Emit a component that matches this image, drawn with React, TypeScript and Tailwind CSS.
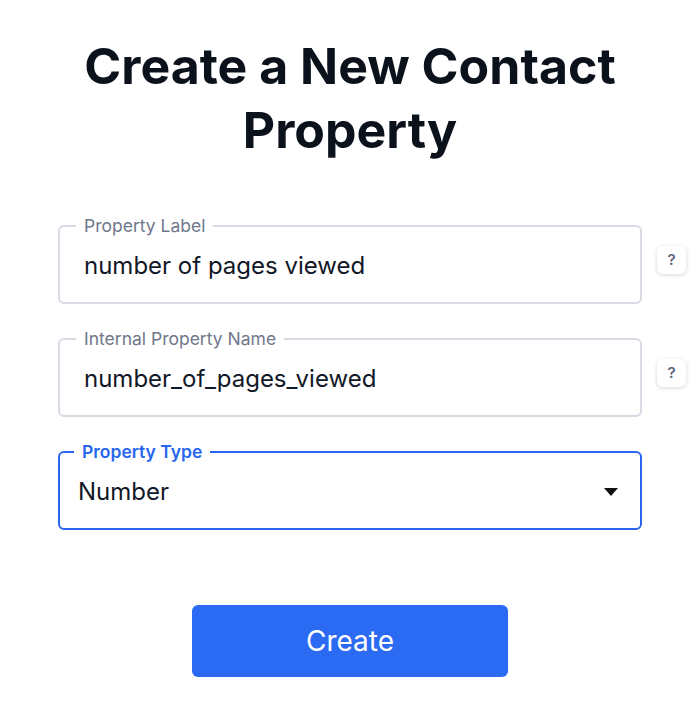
import { useState } from "react";

const font = { fontFamily: '"Inter", "Liberation Sans", sans-serif' };

const HelpButton = () => (
  <div className="w-[44px] flex justify-end">
    <button className="w-[29px] h-[28px] rounded-md bg-white shadow-[0_1px_4px_rgba(15,23,42,0.18)] text-[15px] font-semibold text-[#59627a] flex items-center justify-center">
      ?
    </button>
  </div>
);

const Field = (props: any) => {
  const { label, value, active, select } = props;
  return (
    <div className="flex items-center">
      <div className="w-[44px]" />
      <fieldset
        className={
          "w-[584px] h-[88px] rounded-md px-[16px] " +
          (active ? "border-2 border-[#2866ee]" : "border-2 border-[#d6dbe4]")
        }
      >
        <legend
          className={
            "px-2 text-[17.5px] leading-[20px] " +
            (active ? "font-semibold text-[#2866ee] ml-[-2px]" : "text-[#6f778a]")
          }
        >
          {label}
        </legend>
        <div
          className={
            "flex items-center justify-between h-[44px] mt-[8px] text-[24px] text-[#111827] " +
            (active ? "pl-[2px] pr-[6px]" : "pl-2")
          }
        >
          <span>{value}</span>
          {select && (
            <svg width="14" height="8" viewBox="0 0 14 8">
              <path d="M0 0 L14 0 L7 8 Z" fill="#111" />
            </svg>
          )}
        </div>
      </fieldset>
      {select ? <div className="w-[44px]" /> : <HelpButton />}
    </div>
  );
};

export default function App() {
  const [type] = useState("Number");
  return (
    <div style={font} className="w-[700px] min-h-[702px] bg-white flex flex-col items-center">
      <h1 className="pt-[34px] text-[50px] leading-[64px] font-bold text-[#0c121c] text-center w-[620px]">
        Create a New Contact Property
      </h1>
      <div className="mt-[54px] flex flex-col gap-[25px]">
        <Field label="Property Label" value="number of pages viewed" />
        <Field label="Internal Property Name" value="number_of_pages_viewed" />
        <Field label="Property Type" value={type} active select />
      </div>
      <button className="mt-[75px] w-[316px] h-[72px] rounded-md bg-[#2b6af3] text-white text-[28px]">
        Create
      </button>
    </div>
  );
}
